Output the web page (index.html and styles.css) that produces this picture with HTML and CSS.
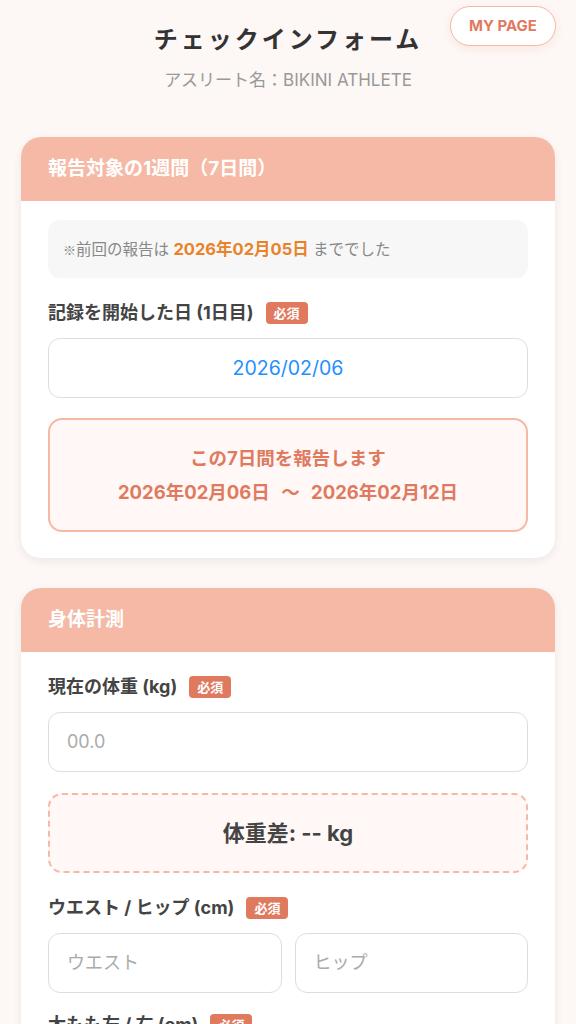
FILE: index.html
```html
<!DOCTYPE html>
<html lang="ja">
<head>
<meta charset="utf-8">
<title>チェックインフォーム</title>
<link rel="stylesheet" href="styles.css">
</head>
<body>
<div class="page">
  <header class="top">
    <a class="mypage" href="#">MY PAGE</a>
    <h1 class="title">チェックインフォーム</h1>
    <p class="athlete">アスリート名：BIKINI ATHLETE</p>
  </header>

  <section class="card">
    <div class="card-head">報告対象の1週間（7日間）</div>
    <div class="card-body">
      <div class="info"><span class="mark">※</span>前回の報告は <strong class="hl">2026年02月05日</strong> まででした</div>
      <div class="field">
        <div class="label">記録を開始した日 (1日目) <span class="req">必須</span></div>
        <div class="input date">2026/02/06</div>
      </div>
      <div class="period">
        <div>この7日間を報告します</div>
        <div class="range">2026年02月06日 〜 2026年02月12日</div>
      </div>
    </div>
  </section>

  <section class="card">
    <div class="card-head">身体計測</div>
    <div class="card-body">
      <div class="field">
        <div class="label">現在の体重 (kg) <span class="req">必須</span></div>
        <div class="input ph">00.0</div>
      </div>
      <div class="diff">体重差: -- kg</div>
      <div class="field">
        <div class="label">ウエスト / ヒップ (cm) <span class="req">必須</span></div>
        <div class="pair">
          <div class="input ph">ウエスト</div>
          <div class="input ph">ヒップ</div>
        </div>
      </div>
      <div class="field">
        <div class="label">太もも左 / 右 (cm) <span class="req">必須</span></div>
        <div class="pair">
          <div class="input ph">左</div>
          <div class="input ph">右</div>
        </div>
      </div>
    </div>
  </section>
</div>
</body>
</html>
```

FILE: styles.css
```css
* { box-sizing: border-box; }
html, body { margin: 0; padding: 0; }
body {
  background: #fdf7f5;
  font-family: "Inter", "Noto Sans CJK JP", sans-serif;
  color: #444;
}
.page {
  padding: 0 21px 40px;
}
.top {
  position: relative;
  text-align: center;
  padding-top: 22px;
  padding-bottom: 45px;
}
.mypage {
  position: absolute;
  top: 6px;
  right: -1px;
  width: 106px;
  height: 40px;
  border: 1.5px solid #f5b9a6;
  border-radius: 20px;
  background: #fff;
  color: #e07a5f;
  font-weight: bold;
  font-size: 15px;
  line-height: 37px;
  text-align: center;
  text-decoration: none;
  box-shadow: 0 3px 8px rgba(224, 122, 95, 0.12);
}
.title {
  margin: 0;
  font-size: 24px;
  line-height: 36px;
  letter-spacing: 3px;
  font-weight: bold;
  color: #333;
}
.athlete {
  margin: 10px 0 0;
  font-size: 17px;
  line-height: 24px;
  color: #999;
}
.card {
  background: #fff;
  border-radius: 20px;
  overflow: hidden;
  box-shadow: 0 3px 10px rgba(0, 0, 0, 0.07);
  margin-bottom: 30px;
}
.card-head {
  background: #f5b9a6;
  color: #fff;
  height: 64px;
  line-height: 64px;
  padding: 0 27px;
  font-size: 19px;
  font-weight: bold;
}
.card-body {
  padding: 24px 27px 26px;
}
.info {
  background: #f7f7f7;
  border-radius: 12px;
  height: 58px;
  line-height: 58px;
  padding: 0 15px;
  font-size: 15.5px;
  color: #888;
  margin: -5px 0 24px;
}
.mark {
  font-family: "Noto Sans CJK JP", sans-serif;
  font-size: 13px;
}
.hl {
  color: #e8832a;
  font-size: 16.5px;
}
.field {
  margin-bottom: 21px;
}
.label {
  display: flex;
  align-items: center;
  gap: 12px;
  font-size: 18px;
  font-weight: bold;
  color: #444;
  line-height: 22px;
  margin-bottom: 14px;
}
.req {
  background: #e07a5f;
  color: #fff;
  font-size: 13px;
  line-height: 22px;
  padding: 0 8px;
  border-radius: 4px;
}
.input {
  height: 60px;
  border: 1px solid #ddd;
  border-radius: 12px;
  background: #fff;
  font-size: 18px;
  line-height: 58px;
  padding: 0 18px;
}
.date {
  text-align: center;
  color: #1e90ff;
  font-size: 19.5px;
}
.ph {
  color: #aaa;
}
.period {
  border: 2px solid #f5b9a6;
  background: #fff8f7;
  border-radius: 14px;
  height: 114px;
  display: flex;
  flex-direction: column;
  justify-content: center;
  align-items: center;
  gap: 10px;
  color: #e07a5f;
  font-size: 18.5px;
  font-weight: bold;
  line-height: 24px;
  margin-top: -1px;
}
.range {
  word-spacing: 7px;
}
.diff {
  border: 2px dashed #f5b9a6;
  background: #fff8f7;
  border-radius: 14px;
  height: 80px;
  line-height: 76px;
  text-align: center;
  font-size: 22px;
  font-weight: bold;
  color: #444;
  margin-bottom: 24px;
}
.pair {
  display: grid;
  grid-template-columns: 1fr 1fr;
  gap: 13px;
}
```
